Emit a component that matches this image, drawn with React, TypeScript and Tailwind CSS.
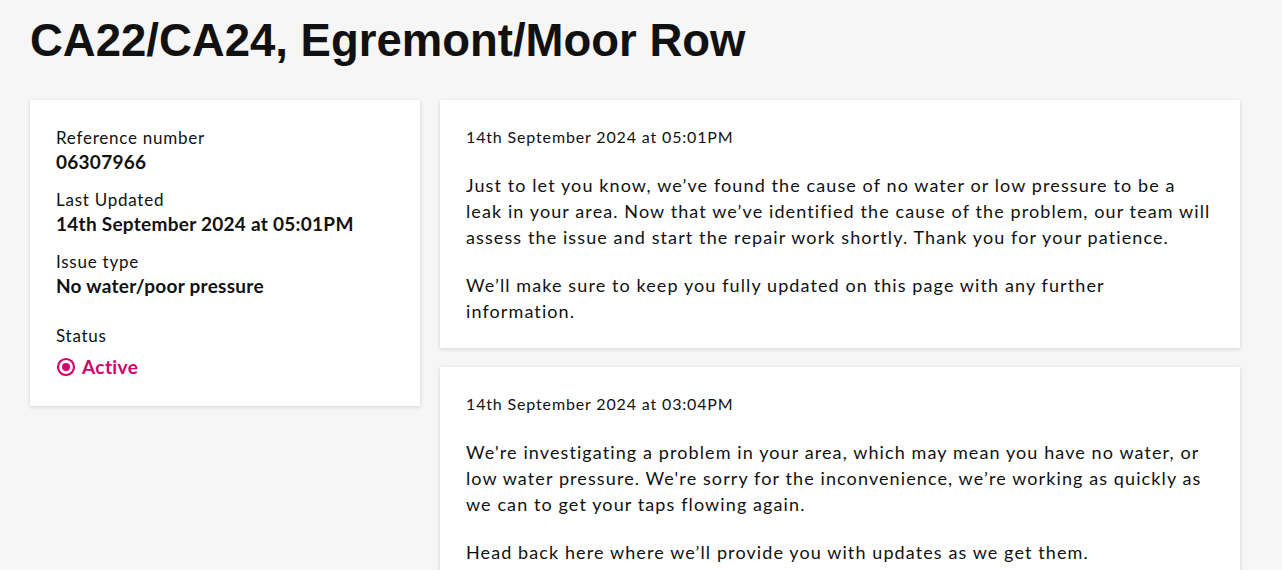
const DETAILS = [
  { label: "Reference number", value: "06307966" },
  { label: "Last Updated", value: "14th September 2024 at 05:01PM" },
  { label: "Issue type", value: "No water/poor pressure" },
];

const UPDATES = [
  {
    date: "14th September 2024 at 05:01PM",
    paragraphs: [
      "Just to let you know, we’ve found the cause of no water or low pressure to be a leak in your area. Now that we’ve identified the cause of the problem, our team will assess the issue and start the repair work shortly. Thank you for your patience.",
      "We’ll make sure to keep you fully updated on this page with any further information.",
    ],
  },
  {
    date: "14th September 2024 at 03:04PM",
    paragraphs: [
      "We're investigating a problem in your area, which may mean you have no water, or low water pressure. We're sorry for the inconvenience, we’re working as quickly as we can to get your taps flowing again.",
      "Head back here where we’ll provide you with updates as we get them.",
    ],
  },
];

export default function App() {
  return (
    <div className="min-h-screen bg-[#f6f6f6] px-[30px] pt-[18px] text-[#111] font-['Lato',sans-serif]">
      <h1 className="font-['Liberation_Sans',Arial,sans-serif] text-[45.5px] font-bold leading-none mb-[36px]">
        CA22/CA24, Egremont/Moor Row
      </h1>

      <div className="flex items-start gap-5">
        <aside className="w-[390px] shrink-0 bg-white shadow-[0_1px_4px_rgba(0,0,0,0.15)] px-[26px] pt-[26px] pb-[27px]">
          {DETAILS.map((d) => (
            <div key={d.label} className="mb-[14px]">
              <div className="text-[17px] leading-6 tracking-[0.75px]">{d.label}</div>
              <div className="text-[19px] leading-6 font-bold tracking-[0.27px]">{d.value}</div>
            </div>
          ))}
          <div className="mt-[26px] text-[17px] leading-6 tracking-[0.75px]">Status</div>
          <div className="mt-[7px] flex items-center gap-[6px] text-[#d3006c] font-bold text-[19px] leading-6 tracking-[0.4px]">
            <svg width="20" height="20" viewBox="0 0 20 20">
              <circle cx="10" cy="10" r="8" fill="none" stroke="#d3006c" strokeWidth="2.2" />
              <circle cx="10" cy="10" r="4" fill="#d3006c" />
            </svg>
            Active
          </div>
        </aside>

        <main className="w-[800px] flex flex-col gap-[19px]">
          {UPDATES.map((u) => (
            <section
              key={u.date}
              className="bg-white shadow-[0_1px_4px_rgba(0,0,0,0.15)] px-[26px] pt-[26px] pb-[24px]"
            >
              <div className="text-[16px] leading-[22px] tracking-[0.85px] mb-[24px]">{u.date}</div>
              {u.paragraphs.map((p, i) => (
                <p key={i} className="text-[18px] leading-[26px] tracking-[1.1px] mb-[22px] last:mb-0">
                  {p}
                </p>
              ))}
            </section>
          ))}
        </main>
      </div>
    </div>
  );
}
